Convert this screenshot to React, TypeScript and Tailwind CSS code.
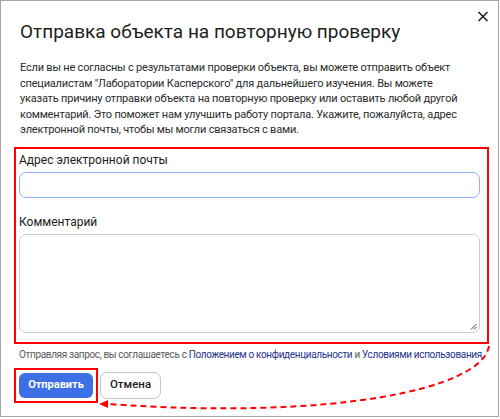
import React from "react";

export default function App() {
  return (
    <div className="w-[500px] h-[419px] bg-white" style={{ fontFamily: "Roboto, 'Noto Sans', sans-serif" }}>
      <div className="relative w-[499px] h-[417px] border border-[#a6a6a6] bg-white px-[18px]">
        <button className="absolute left-[476px] top-[10px]" aria-label="close">
          <svg width="12" height="11" viewBox="0 0 12 11">
            <path d="M1.5 1 L10.5 10 M10.5 1 L1.5 10" stroke="#1a1a1a" strokeWidth="1.5" fill="none" />
          </svg>
        </button>
        <h1 className="pt-[19px] ml-[1px] text-[19px] leading-[24px] font-normal text-[#1d1d1b]">
          Отправка объекта на повторную проверку
        </h1>
        <p className="mt-[16px] ml-[1px] mr-[-9px] text-[11px] leading-[15.5px] tracking-[-0.2px] text-[#2b2b2b] whitespace-nowrap">
          Если вы не согласны с результатами проверки объекта, вы можете отправить объект
          <br />
          специалистам "Лаборатории Касперского" для дальнейшего изучения. Вы можете
          <br />
          указать причину отправки объекта на повторную проверку или оставить любой другой
          <br />
          комментарий. Это поможет нам улучшить работу портала. Укажите, пожалуйста, адрес
          <br />
          электронной почты, чтобы мы могли связаться с вами.
        </p>
        <div className="mt-[9px] ml-[-5px] mr-[-9px] border-2 border-[#ff0000] pl-[3px] pr-[7px] pt-[3px] pb-[9px]">
          <label className="block text-[12px] leading-[16px] text-[#1d1d1b]">Адрес электронной почты</label>
          <div className="mt-[4px] h-[26px] rounded-[7px] border border-[#8fb1ff] bg-white" />
          <label className="block mt-[16px] text-[12px] leading-[16px] text-[#1d1d1b]">Комментарий</label>
          <div className="relative mt-[4px] h-[99px] rounded-[7px] border border-[#c9cdd2] bg-white">
            <svg className="absolute right-[2px] bottom-[2px]" width="7" height="7" viewBox="0 0 7 7">
              <path d="M6.5 1 L1 6.5 M6.5 4 L4 6.5" stroke="#444" strokeWidth="1" />
            </svg>
          </div>
        </div>
        <p className="mt-[4px] text-[10px] leading-[14px] tracking-[-0.35px] text-[#5a5a5a] whitespace-nowrap">
          Отправляя запрос, вы соглашаетесь с{" "}
          <span className="text-[#26348b]">Положением о конфиденциальности</span> и{" "}
          <span className="text-[#26348b]">Условиями использования</span>.
        </p>
        <div className="mt-[6px] flex items-center gap-[2px]">
          <div className="ml-[-5px] border-2 border-[#ff0000] p-[3px]">
            <button className="block h-[25px] w-[74px] rounded-[6px] bg-[#3d6fe6] text-[11px] font-bold text-white">
              Отправить
            </button>
          </div>
          <button className="h-[27px] w-[61px] rounded-[7px] border border-[#c4c4c4] bg-white text-[11.5px] font-medium text-[#1d1d1b]">
            Отмена
          </button>
        </div>
        <svg className="absolute left-[-1px] top-[-1px] pointer-events-none" width="500" height="419">
          <path
            d="M489 346 C 482 390 330 420 108 404"
            stroke="#ff0000"
            strokeWidth="2"
            strokeDasharray="6 4"
            fill="none"
          />
          <path d="M99 404 L108 400 L108 408 Z" fill="#ff0000" />
        </svg>
      </div>
    </div>
  );
}
